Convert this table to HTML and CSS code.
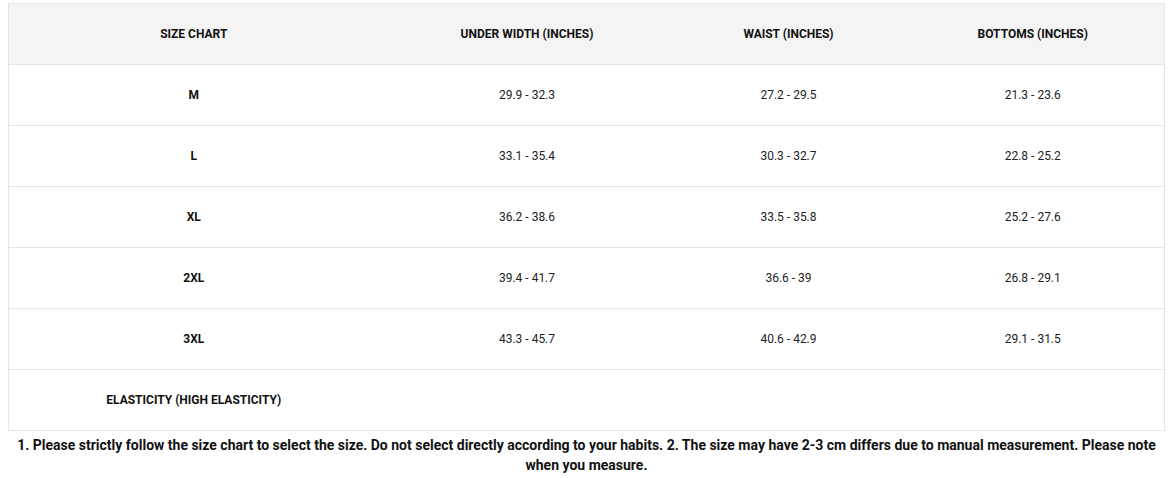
FILE: index.html
```html
<!DOCTYPE html>
<html>
<head>
<meta charset="utf-8">
<link rel="stylesheet" href="styles.css">
</head>
<body>
<table class="chart">
  <colgroup>
    <col class="c1"><col class="c2"><col class="c3"><col class="c4">
  </colgroup>
  <thead>
    <tr><th>SIZE CHART</th><th>UNDER WIDTH (INCHES)</th><th>WAIST (INCHES)</th><th>BOTTOMS (INCHES)</th></tr>
  </thead>
  <tbody>
    <tr><td class="size">M</td><td>29.9 - 32.3</td><td>27.2 - 29.5</td><td>21.3 - 23.6</td></tr>
    <tr><td class="size">L</td><td>33.1 - 35.4</td><td>30.3 - 32.7</td><td>22.8 - 25.2</td></tr>
    <tr><td class="size">XL</td><td>36.2 - 38.6</td><td>33.5 - 35.8</td><td>25.2 - 27.6</td></tr>
    <tr><td class="size">2XL</td><td>39.4 - 41.7</td><td>36.6 - 39</td><td>26.8 - 29.1</td></tr>
    <tr><td class="size">3XL</td><td>43.3 - 45.7</td><td>40.6 - 42.9</td><td>29.1 - 31.5</td></tr>
    <tr><td class="size">ELASTICITY (HIGH ELASTICITY)</td><td></td><td></td><td></td></tr>
  </tbody>
</table>
<p class="note">1. Please strictly follow the size chart to select the size. Do not select directly according to your habits. 2. The size may have 2-3 cm differs due to manual measurement. Please note when you measure.</p>
</body>
</html>
```
FILE: styles.css
```css
html, body {
  background: #ffffff;
}
body {
  margin: 3px 8px 8px 8px;
  font-family: Roboto, "Liberation Sans", Arial, sans-serif;
  color: #111111;
}
.chart {
  width: 1156px;
  border-collapse: collapse;
  table-layout: fixed;
  border: 1px solid #e3e6e8;
}
.c1 { width: 370px; }
.c2 { width: 297px; }
.c3 { width: 226px; }
.c4 { width: 263px; }
.chart th,
.chart td {
  height: 60px;
  padding: 0;
  text-align: center;
  vertical-align: middle;
  font-size: 12px;
  border-bottom: 1px solid #e3e6e8;
}
.chart th {
  background: #f4f4f4;
  font-weight: 700;
}
.chart td {
  font-weight: 400;
  color: #222222;
}
.chart td.size {
  font-weight: 700;
  color: #111111;
}
.note {
  margin: 4px 0 0 0;
  text-align: center;
  font-size: 14px;
  line-height: 20px;
  font-weight: 700;
  color: #111111;
}
```
